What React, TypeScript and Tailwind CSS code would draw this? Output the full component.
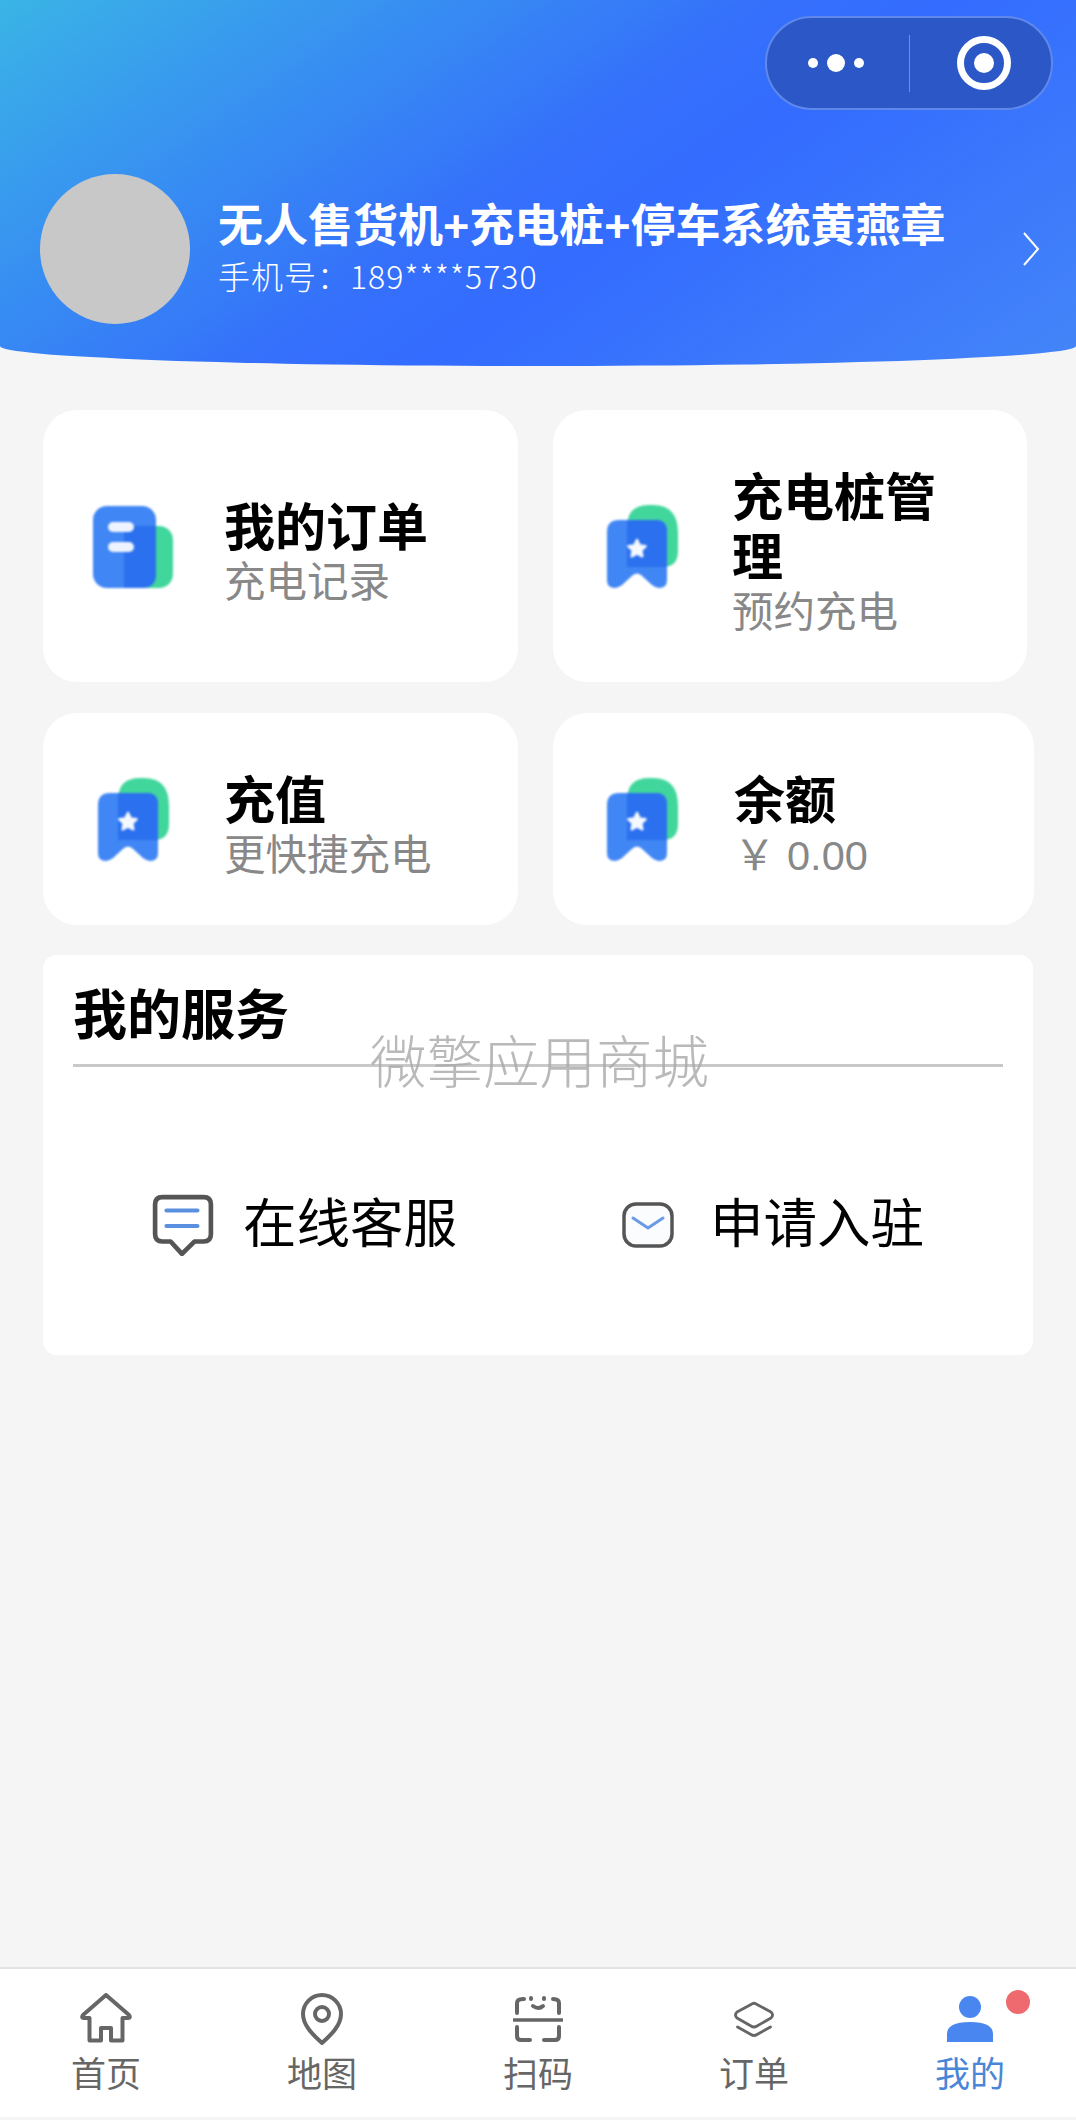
const FONT = "font-['Liberation_Sans','Noto_Sans_CJK_SC',sans-serif]"

const DocIcon = () => (
  <svg width="80" height="83" viewBox="0 0 80 83" className="mt-[3px] shrink-0 blur-[1px]">
    <rect x="40" y="20" width="40" height="62" rx="14" fill="#41d69c" />
    <rect x="0" y="0" width="63" height="82" rx="14" fill="#4086f4" />
    <path d="M31 20H63V68Q63 82 49 82H31Z" fill="#2b70ee" />
    <rect x="15" y="16" width="26" height="10" rx="5" fill="#eef4ff" />
    <rect x="15" y="36" width="26" height="10" rx="5" fill="#eef4ff" />
  </svg>
)

const BookmarkIcon = () => (
  <svg width="72" height="83" viewBox="0 0 72 83" className="shrink-0 blur-[1px]">
    <path d="M20 22Q20 0 42 0H46Q71 0 71 28V46Q71 62 56 62H20Z" fill="#41d69c" />
    <path d="M12 15H49Q60 15 60 27V75Q60 83 52 83Q49 83 45 80L34 70Q30 67 26 70L15 80Q11 83 8 83Q0 83 0 75V27Q0 15 12 15Z" fill="#4086f4" />
    <path d="M20 15H49Q60 15 60 27V62H20Z" fill="#2b70ee" />
    <path
      d="M30 35L32.6 40.4L38.6 41.2L34.3 45.4L35.3 51.3L30 48.5L24.7 51.3L25.7 45.4L21.4 41.2L27.4 40.4Z"
      fill="#f4f8ff"
      stroke="#f4f8ff"
      strokeWidth="2.5"
      strokeLinejoin="round"
    />
  </svg>
)

type CardProps = {
  icon: React.ReactNode
  title: string
  sub: string
  className: string
  iconSlot: string
}

const Card = ({ icon, title, sub, className, iconSlot }: CardProps) => (
  <div className={`flex items-center rounded-[34px] bg-white ${className}`}>
    <div className={`flex shrink-0 ${iconSlot}`}>{icon}</div>
    <div className="w-[205px] pt-[13px]">
      <div className="text-[51px] leading-[60px] font-bold text-black">{title}</div>
      <div className="text-[41.5px] leading-[47px] whitespace-nowrap text-[#888]">{sub}</div>
    </div>
  </div>
)

const Tab = ({ label, active, children }: { label: string; active?: boolean; children: React.ReactNode }) => (
  <div className={`flex flex-col items-center ${active ? 'text-[#4a86d8]' : 'text-[#666]'}`}>
    <div className="flex h-[54px] items-center justify-center pt-[2px]">{children}</div>
    <div className="mt-[10px] text-[35px] leading-[40px]">{label}</div>
  </div>
)

export default function App() {
  return (
    <div className={`relative flex h-[2120px] w-[1076px] flex-col overflow-hidden bg-[#f5f5f5] ${FONT}`}>
      {/* header */}
      <div className="flex h-[366px] shrink-0 items-start rounded-b-[538px_20px] bg-[linear-gradient(145deg,#3ab4e6_0%,#3570fb_48%,#336cff_60%,#4485f8_100%)] pt-[174px] pr-[36px] pl-[40px]">
        <div className="h-[150px] w-[150px] shrink-0 rounded-full bg-[#c8c8c8]" />
        <div className="ml-[28px] flex-1 pt-[25px] text-white">
          <div className="text-[45px] leading-[56px] font-bold whitespace-nowrap">无人售货机+充电桩+停车系统黄燕章</div>
          <div className="font-['Noto_Sans_CJK_SC'] text-[32px] leading-[40px] font-light tracking-[1px]">手机号：189****5730</div>
        </div>
        <svg width="18" height="34" viewBox="0 0 18 34" fill="none" className="mt-[58px] shrink-0">
          <path d="M2 1L16 17L2 33" stroke="#fff" strokeWidth="2" />
        </svg>
      </div>

      {/* capsule */}
      <div className="absolute top-[16px] left-[765px] flex h-[94px] w-[288px] items-center rounded-full border-2 border-[#5f88ea] bg-[#2b58c6]">
        <div className="flex w-[142px] items-center justify-center gap-[9px] pr-[4px]">
          <span className="h-[10px] w-[10px] rounded-full bg-white" />
          <span className="h-[18px] w-[18px] rounded-full bg-white" />
          <span className="h-[10px] w-[10px] rounded-full bg-white" />
        </div>
        <div className="h-[57px] w-[1px] bg-[#6d90e6]" />
        <div className="flex flex-1 items-center justify-center pl-[6px]">
          <div className="flex h-[54px] w-[54px] items-center justify-center rounded-full border-[7px] border-white">
            <span className="h-[20px] w-[20px] rounded-full bg-white" />
          </div>
        </div>
      </div>

      {/* cards */}
      <div className="mt-[44px] flex gap-[35px] pl-[43px]">
        <Card icon={<DocIcon />} title="我的订单" sub="充电记录" className="h-[272px] w-[475px]" iconSlot="w-[181px] pl-[50px]" />
        <Card icon={<BookmarkIcon />} title="充电桩管理" sub="预约充电" className="h-[272px] w-[474px]" iconSlot="w-[179px] pl-[54px]" />
      </div>
      <div className="mt-[31px] flex gap-[35px] pl-[43px]">
        <Card icon={<BookmarkIcon />} title="充值" sub="更快捷充电" className="h-[212px] w-[475px]" iconSlot="w-[181px] pl-[55px]" />
        <Card icon={<BookmarkIcon />} title="余额" sub="￥ 0.00" className="h-[212px] w-[481px]" iconSlot="w-[181px] pl-[54px]" />
      </div>

      {/* services */}
      <div className="mt-[30px] ml-[43px] h-[400px] w-[990px] rounded-[14px] bg-white px-[30px] pt-[28px]">
        <div className="border-b-[3px] border-[#c8c8c8] pb-[14px] text-[54px] leading-[67px] font-bold text-black">我的服务</div>
        <div className="mt-[126px] flex items-center text-[53.5px] leading-[60px] text-black">
          <svg width="62" height="62" viewBox="0 0 60 60" fill="none" className="mt-[1px] ml-[79px] shrink-0">
            <path d="M10 3H50Q57 3 57 10V39Q57 46 50 46H41L29 58L18 46H10Q3 46 3 39V10Q3 3 10 3Z" stroke="#555" strokeWidth="4.5" strokeLinejoin="round" />
            <path d="M14 16H44M14 31H44" stroke="#5b8fe0" strokeWidth="4" strokeLinecap="round" />
          </svg>
          <span className="ml-[29px]">在线客服</span>
          <svg width="52" height="46" viewBox="0 0 52 46" fill="none" className="ml-[165px] shrink-0">
            <rect x="2" y="2" width="48" height="42" rx="12" fill="#fbfcfe" stroke="#555" strokeWidth="3.5" />
            <path d="M11 16L26 26L41 16" stroke="#6b9ae6" strokeWidth="3" strokeLinecap="round" strokeLinejoin="round" />
          </svg>
          <span className="ml-[36px]">申请入驻</span>
        </div>
      </div>

      {/* watermark */}
      <div className="absolute top-[1032px] left-[370px] text-[56.5px] leading-[64px] font-light whitespace-nowrap text-[#a8a8a8] opacity-80">微擎应用商城</div>

      {/* tab bar */}
      <div className="relative mt-auto mb-[3px] -ml-[2px] grid h-[150px] w-[1080px] grid-cols-5 border-t-2 border-[#e2e2e2] bg-white pt-[22px]">
        <Tab label="首页">
          <svg width="52" height="52" viewBox="0 0 52 52" fill="none" stroke="#666" strokeWidth="4" strokeLinejoin="round">
            <path d="M26 2L3 22Q1 25 4 25H9.5V47.5H21V35H31V47.5H42.5V25H48Q51 25 49 22Z" />
          </svg>
        </Tab>
        <Tab label="地图">
          <svg width="42" height="52" viewBox="0 0 42 52" fill="none" stroke="#666" strokeWidth="4">
            <path d="M21 50C11 41 2 32 2 21A19 19 0 0 1 40 21C40 32 31 41 21 50Z" strokeLinejoin="round" />
            <circle cx="21" cy="21" r="7" />
          </svg>
        </Tab>
        <Tab label="扫码">
          <svg width="50" height="48" viewBox="0 0 50 48" fill="none" stroke="#666" strokeWidth="4" strokeLinecap="round">
            <path d="M4 18V8Q4 4 10 4H11" />
            <path d="M40 4Q46 4 46 8V18" />
            <path d="M18 3V4M31 3V4" />
            <path d="M20 11Q25.5 15 30 11" />
            <path d="M1 25H49" strokeWidth="3.5" />
            <path d="M4 32V41Q4 45 8 45H17" />
            <path d="M31 45H42Q46 45 46 41V32" />
          </svg>
        </Tab>
        <Tab label="订单">
          <svg width="40" height="36" viewBox="0 0 40 36" fill="none" stroke="#666" strokeWidth="2.8" strokeLinejoin="round" strokeLinecap="round">
            <path d="M17 3.5Q20 1 23 3.5L37 11Q40 14 37 17L23 25Q20 27 17 25L3 17Q0 14 3 11Z" />
            <path d="M3.5 26L17 33.5Q20 35.5 23 33.5L36.5 26" />
          </svg>
        </Tab>
        <Tab label="我的" active>
          <svg width="46" height="46" viewBox="0 0 46 46" fill="#4a86f0">
            <circle cx="23" cy="11" r="11" />
            <path d="M0 46V38Q0 26 23 26Q46 26 46 38V46Z" />
          </svg>
        </Tab>
        <span className="absolute top-[21px] left-[1008px] h-[24px] w-[24px] rounded-full bg-[#ef6a6e]" />
      </div>
    </div>
  )
}
